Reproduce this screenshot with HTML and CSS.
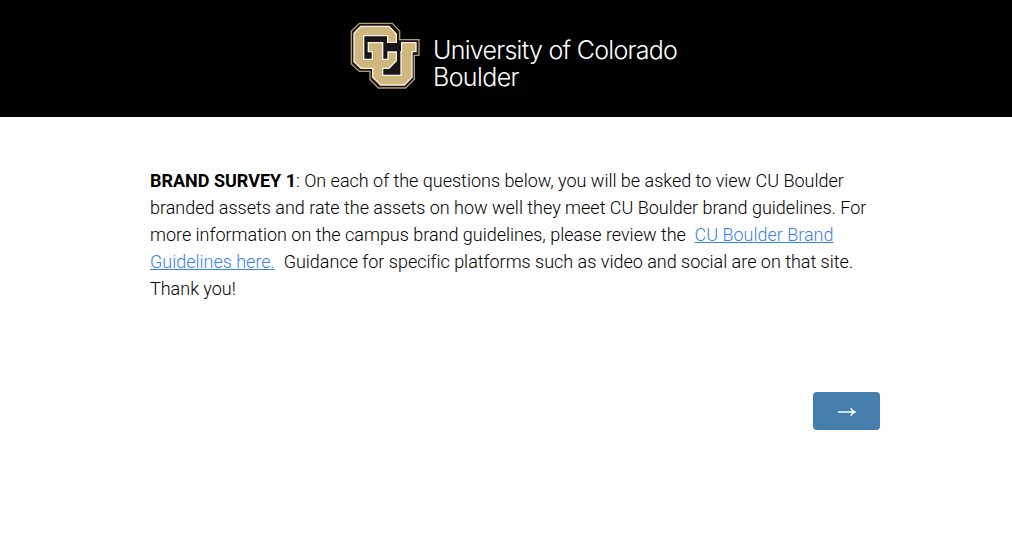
FILE: index.html
```html
<!DOCTYPE html>
<html lang="en">
<head>
  <title>Brand Survey 1</title>
  <meta charset="UTF-8"/>
  <meta name="viewport" content="width=device-width,initial-scale=1"/>
  <link rel="stylesheet" href="styles.css">
</head>
<body>
<header class="banner">
  <svg class="logo" viewBox="0 0 240 228" aria-hidden="true">
    <path class="logo-edge" d="M43 16H142L164 39V65H222V112H208V184L182 210H100L75 185V160H43L19 138V39Z"/>
    <path class="logo-gold" d="M47 25H132L154 48V73H128V53H56V124H82V101H70V74H113V124H129V102H154V128L132 151H113V172H168V101H170V74H213V101H201V178L178 201H107L83 178V151H48L27 131V46Z"/>
  </svg>
  <div class="wordmark">
    <span class="wordmark-top">University of Colorado</span>
    <span class="wordmark-bottom">Boulder</span>
  </div>
</header>

<main class="survey">
  <p class="question"><b>BRAND SURVEY 1</b>: On each of the questions below, you will be asked to view CU Boulder branded assets and rate the assets on how well they meet CU Boulder brand guidelines. For more information on the campus brand guidelines, please review the&nbsp; <a href="#">CU Boulder Brand Guidelines here.</a>&nbsp; Guidance for specific platforms such as video and social are on that site. Thank you!</p>
  <div class="buttons">
    <button type="button" class="next" aria-label="Next">
      <svg class="arrow" viewBox="0 0 18 10" aria-hidden="true">
        <path d="M0 5H16.5M12.8 1.2C13.4 3 14.8 4.4 17 5C14.8 5.6 13.4 7 12.8 8.8"/>
      </svg>
    </button>
  </div>
</main>
</body>
</html>
```
FILE: styles.css
```css
body {
  margin: 0;
  font-family: Roboto, Arial, sans-serif;
  color: #000;
  background: #fff;
}

.banner {
  display: flex;
  box-sizing: border-box;
  height: 117px;
  padding: 18px 0 0 345px;
  background: #000;
}

.logo {
  width: 80px;
  height: 76px;
}

.logo-edge {
  fill: #1a1418;
  stroke: #b09a68;
  stroke-width: 4;
}

.logo-gold {
  fill: #cfb67c;
  stroke: #f5f2ec;
  stroke-width: 4;
}

.wordmark {
  display: flex;
  flex-direction: column;
  padding: 19px 0 0 8px;
  font-family: Inter, "Liberation Sans", sans-serif;
  font-size: 25px;
  font-weight: 300;
  line-height: 27px;
  white-space: nowrap;
  color: #fff;
}

.wordmark-top {
  letter-spacing: -0.73px;
}

.wordmark-bottom {
  letter-spacing: -0.6px;
}

.survey {
  width: 730px;
  margin-left: 150px;
  padding-top: 50px;
}

.question {
  margin: 0;
  font-size: 18px;
  font-weight: 300;
  line-height: 27px;
  letter-spacing: -0.01px;
}

.question b {
  font-weight: 700;
}

.question a {
  color: #3b7fec;
}

.buttons {
  display: flex;
  justify-content: flex-end;
  padding-top: 90px;
}

.next {
  display: flex;
  align-items: center;
  justify-content: center;
  width: 67px;
  height: 38px;
  padding: 2px 0 0;
  border: 0;
  border-radius: 4px;
  background: #457dad;
}

.arrow {
  width: 18px;
  height: 10px;
  fill: none;
  stroke: #fff;
  stroke-width: 1.4;
}
```
